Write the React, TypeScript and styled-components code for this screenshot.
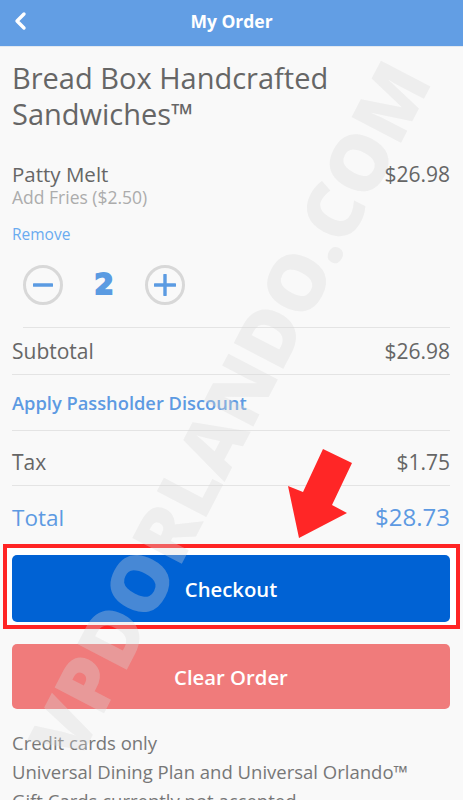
import styled, { createGlobalStyle } from 'styled-components'

const GlobalStyle = createGlobalStyle`
  html, body {
    margin: 0;
    padding: 0;
    background: #f9f9f9;
  }
  body {
    font-family: "Open Sans", Lato, sans-serif;
  }
`

const Screen = styled.div`
  position: relative;
  width: 463px;
  height: 800px;
  overflow: hidden;
  background: #f9f9f9;
`

const TopBar = styled.header`
  position: relative;
  z-index: 3;
  box-sizing: border-box;
  height: 47px;
  padding-bottom: 4px;
  background: #629ee4;
  border-bottom: 1px solid #e3e9f0;
  display: grid;
  grid-template-columns: 60px 1fr 60px;
  align-items: center;
`

const BackButton = styled.button`
  border: 0;
  background: none;
  padding: 0 0 0 13px;
  height: 42px;
  display: flex;
  align-items: center;
  cursor: pointer;
`

const BarTitle = styled.h1`
  margin: 0;
  text-align: center;
  color: #fff;
  font-size: 17.5px;
  font-weight: 700;
`

const Content = styled.main`
  padding: 0 13px 0 12px;
`

const ShopName = styled.h2`
  margin: 13px 0 0;
  font-size: 29px;
  line-height: 36px;
  font-weight: 400;
  color: #666;
`

const ItemRow = styled.div`
  display: flex;
  justify-content: space-between;
  margin-top: 30px;
`

const ItemName = styled.div`
  font-size: 20.5px;
  line-height: 24px;
  color: #666;
`

const ItemOption = styled.div`
  font-size: 17.5px;
  line-height: 22px;
  color: #acacac;
`

const Price = styled.div<{ $blue?: boolean; $big?: boolean }>`
  font-size: ${p => (p.$big ? '24px' : '21px')};
  line-height: ${p => (p.$big ? '30px' : '24px')};
  color: ${p => (p.$blue ? '#5d9ae2' : '#666')};
`

const RemoveLink = styled.a`
  display: block;
  margin-top: 16px;
  font-size: 15.5px;
  line-height: 20px;
  color: #6aabf0;
`

const QtyRow = styled.div`
  display: flex;
  align-items: center;
  margin: 21px 0 0 11px;
  padding-bottom: 22px;
  border-bottom: 1px solid #e4e4e4;
`

const RoundButton = styled.button`
  width: 40px;
  height: 40px;
  border-radius: 50%;
  border: 3px solid #d8d8d8;
  background: transparent;
  padding: 0;
  display: flex;
  align-items: center;
  justify-content: center;
`

const Count = styled.span`
  width: 82px;
  text-align: center;
  font-family: "DejaVu Sans", sans-serif;
  font-size: 28px;
  line-height: 40px;
  font-weight: 700;
  color: #5b9be2;
  -webkit-text-stroke: 1.8px #5b9be2;
`

const SummaryRow = styled.div<{ $top: number; $bottom: number; $last?: boolean }>`
  display: flex;
  justify-content: space-between;
  align-items: baseline;
  padding: ${p => `${p.$top}px 0 ${p.$bottom}px`};
  border-bottom: ${p => (p.$last ? 'none' : '1px solid #e4e4e4')};
`

const Label = styled.span<{ $blue?: boolean; $big?: boolean }>`
  font-size: ${p => (p.$big ? '22.5px' : '21px')};
  line-height: ${p => (p.$big ? '30px' : '24px')};
  color: ${p => (p.$blue ? '#5d9ae2' : '#666')};
`

const DiscountLink = styled.a`
  font-size: 18.3px;
  line-height: 24px;
  font-weight: 600;
  color: #5d9ae2;
`

const Highlight = styled.div`
  margin: 11px -10px 0 -9px;
  border: 4px solid #ff2424;
  background: #fff;
  padding: 7px 6px 3px 5px;
`

const ActionButton = styled.button<{ $tone: 'primary' | 'danger' }>`
  display: block;
  width: 100%;
  height: ${p => (p.$tone === 'primary' ? '67px' : '65px')};
  border: 0;
  border-radius: 5px;
  background: ${p => (p.$tone === 'primary' ? '#0062d4' : '#f07b7b')};
  color: #fff;
  font-family: "Open Sans", Lato, sans-serif;
  font-size: 20.3px;
  font-weight: 600;
  margin-top: ${p => (p.$tone === 'primary' ? '0' : '15px')};
`

const Notes = styled.div`
  margin-top: 19px;
  font-size: 18.5px;
  line-height: 29px;
  color: #777;
  white-space: nowrap;
`

const Watermark = styled.div`
  position: absolute;
  z-index: 2;
  left: 228px;
  top: 410px;
  transform: translate(-50%, -50%) rotate(-62.5deg);
  white-space: nowrap;
  font-family: "Open Sans", sans-serif;
  font-weight: 800;
  font-size: 78px;
  color: rgba(215, 215, 215, 0.33);
  pointer-events: none;
`

const Arrow = styled.svg`
  position: absolute;
  z-index: 4;
  left: 0;
  top: 0;
  pointer-events: none;
`

export default function App() {
  return (
    <Screen>
      <GlobalStyle />
      <TopBar>
        <BackButton aria-label="Back">
          <svg width="14" height="20" viewBox="0 0 14 20">
            <polyline points="11,3 4,10 11,17" fill="none" stroke="#fff" strokeWidth="3.4" strokeLinecap="round" strokeLinejoin="round" />
          </svg>
        </BackButton>
        <BarTitle>My Order</BarTitle>
        <span />
      </TopBar>

      <Content>
        <ShopName>Bread Box Handcrafted Sandwiches™</ShopName>

        <ItemRow>
          <div>
            <ItemName>Patty Melt</ItemName>
            <ItemOption>Add Fries ($2.50)</ItemOption>
          </div>
          <Price>$26.98</Price>
        </ItemRow>
        <RemoveLink>Remove</RemoveLink>

        <QtyRow>
          <RoundButton aria-label="Decrease">
            <svg width="20" height="20" viewBox="0 0 20 20">
              <line x1="1" y1="10" x2="19" y2="10" stroke="#5b9be2" strokeWidth="3.4" strokeLinecap="round" />
            </svg>
          </RoundButton>
          <Count>2</Count>
          <RoundButton aria-label="Increase">
            <svg width="22" height="22" viewBox="0 0 22 22">
              <line x1="1" y1="11" x2="21" y2="11" stroke="#5b9be2" strokeWidth="3.4" strokeLinecap="round" />
              <line x1="11" y1="1" x2="11" y2="21" stroke="#5b9be2" strokeWidth="3.4" strokeLinecap="round" />
            </svg>
          </RoundButton>
        </QtyRow>

        <SummaryRow $top={11} $bottom={11}>
          <Label>Subtotal</Label>
          <Price>$26.98</Price>
        </SummaryRow>
        <SummaryRow $top={16} $bottom={15}>
          <DiscountLink>Apply Passholder Discount</DiscountLink>
        </SummaryRow>
        <SummaryRow $top={19} $bottom={11}>
          <Label>Tax</Label>
          <Price>$1.75</Price>
        </SummaryRow>
        <SummaryRow $top={16} $bottom={0} $last>
          <Label $blue $big>Total</Label>
          <Price $blue $big>$28.73</Price>
        </SummaryRow>

        <Highlight>
          <ActionButton $tone="primary">Checkout</ActionButton>
        </Highlight>
        <ActionButton $tone="danger">Clear Order</ActionButton>

        <Notes>
          <div>Credit cards only</div>
          <div>Universal Dining Plan and Universal Orlando™</div>
          <div>Gift Cards currently not accepted</div>
        </Notes>
      </Content>

      <Watermark>VPDORLANDO.COM</Watermark>

      <Arrow width="463" height="800" viewBox="0 0 463 800">
        <polygon points="299,538 288,486 303,492 323,449 352,463 332,505 347,513" fill="#ff2626" />
      </Arrow>
    </Screen>
  )
}
